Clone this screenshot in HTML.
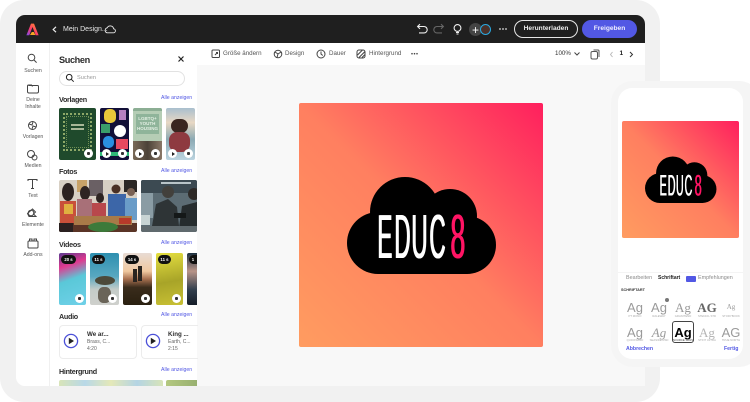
<!DOCTYPE html>
<html lang="de"><head><meta charset="utf-8"><title>Adobe Express</title>
<style>
html,body{margin:0;padding:0;background:#fff}
#p{position:relative;width:750px;height:402px;overflow:hidden;background:#fff;font-family:"Liberation Sans",sans-serif;color:#222;filter:blur(.35px)}
#p div,#p span.a,#p svg.a{position:absolute}
.t{white-space:nowrap;line-height:1}
.h{font-weight:bold;font-size:7.2px;letter-spacing:-.3px;color:#2c2c2c}
.l{font-size:5.2px;color:#5258e4}
.r{font-size:5.2px;color:#555;width:34px;text-align:center;left:16px;line-height:7px}
.th{border-radius:2px;overflow:hidden}
.b{width:9px;height:9px;border-radius:50%;background:#fff}
.b:after{content:"";position:absolute;left:3px;top:3px;width:3px;height:3px;background:#333;border-radius:1px}
.pl:after{left:3.5px;top:2.5px;width:0;height:0;background:none;border-radius:0;border-left:3px solid #222;border-top:2px solid transparent;border-bottom:2px solid transparent}
.pill{height:9px;border-radius:5px;background:#111;color:#fff;font-size:4.3px;line-height:9px;text-align:center;font-weight:bold}
.ag{font-size:13px;color:#9a9a9a;width:24px;text-align:center;line-height:1}
.c{font-size:2.8px;color:#aaa;width:26px;text-align:center;line-height:1}
.art{width:244px;height:244px;overflow:hidden}
.e{font-size:62px;line-height:62px;top:103.5px;white-space:nowrap;color:#fff;transform-origin:0 0;transform:scaleX(.36);text-shadow:2.5px 0 0 #fff}
.e8{color:#ff1464;transform:scaleX(.43);text-shadow:2px 0 0 #ff1464}
</style></head><body><div id="p">

<div style="left:0;top:0;width:660px;height:402px;background:#f1f1f1;border-radius:24px"></div>
<div style="left:16px;top:15px;width:629px;height:371px;background:#f8f8f8;border-radius:9px 9px 0 9px;overflow:hidden"></div>

<!-- top bar -->
<div style="left:16px;top:15px;width:629px;height:28px;background:#1f1f1f;border-radius:9px 9px 0 0"></div>
<svg class="a" style="left:26px;top:23px" width="13" height="13" viewBox="0 0 13 13"><defs><linearGradient id="lg" x1="0" y1="1" x2="1" y2="0"><stop offset="0" stop-color="#7a4cf0"/><stop offset=".45" stop-color="#ff3a6a"/><stop offset="1" stop-color="#ffa020"/></linearGradient></defs><path d="M5 .6h3l4.600 11.600H9.700L6.500 4 3.300 12.200H.4z" fill="url(#lg)"/><path d="M4 12l1.800-3h2L9.400 12z" fill="#f5a623"/></svg>
<svg class="a" style="left:52px;top:26px" width="5" height="7" viewBox="0 0 5 7"><path d="M4 .8L1.200 3.500 4 6.200" fill="none" stroke="#eee" stroke-width="1.200"/></svg>
<div class="t" style="left:63px;top:25.500px;font-size:7px;color:#e8e8e8">Mein Design...</div>
<svg class="a" style="left:104px;top:24px" width="12" height="10" viewBox="0 0 12 10"><path d="M3 8.800h6.200a2 2 0 0 0 .4-4 3.400 3.400 0 0 0-6.400-1A2.600 2.600 0 0 0 3 8.800z" fill="none" stroke="#eee" stroke-width=".9"/></svg>
<svg class="a" style="left:416px;top:23px" width="30" height="12" viewBox="0 0 30 12"><path d="M2 3.500h6a3.200 3.200 0 0 1 0 6.400H3M4 1.200L1.600 3.500 4 5.800" fill="none" stroke="#eee" stroke-width="1.100"/><path d="M27 3.500h-6a3.200 3.200 0 0 0 0 6.400h5M25 1.200l2.400 2.300L25 5.800" fill="none" stroke="#666" stroke-width="1.100"/></svg>
<svg class="a" style="left:452px;top:23px" width="11" height="13" viewBox="0 0 11 13"><circle cx="5.500" cy="5" r="3.400" fill="none" stroke="#eee" stroke-width="1.100"/><path d="M4 9.500h3M4.500 11h2" stroke="#eee" stroke-width="1"/></svg>
<div style="left:469px;top:23px;width:13px;height:13px;border-radius:50%;background:#444"></div>
<div class="t" style="left:469px;top:23.500px;width:13px;text-align:center;font-size:12px;color:#fff">+</div>
<div style="left:480px;top:24px;width:9px;height:9px;border-radius:50%;background:#4a3028;border:1.200px solid #2aa8e0"></div>
<svg class="a" style="left:498px;top:27px" width="10" height="4" viewBox="0 0 10 4"><circle cx="2" cy="2" r=".9" fill="#ddd"/><circle cx="5" cy="2" r=".9" fill="#ddd"/><circle cx="8" cy="2" r=".9" fill="#ddd"/></svg>
<div class="t" style="left:514px;top:20px;width:62px;height:16px;border:1px solid #e6e6e6;border-radius:10px;text-align:center;color:#eee;font-size:6.600px;font-weight:bold;line-height:16px">Herunterladen</div>
<div class="t" style="left:582px;top:20px;width:55px;height:18px;border-radius:10px;background:#5258e4;text-align:center;color:#eef;font-size:6.600px;font-weight:bold;line-height:18px">Freigeben</div>

<!-- rail + panel -->
<div style="left:16px;top:43px;width:33px;height:343px;background:#fff;border-radius:0 0 0 9px"></div>
<div style="left:49px;top:43px;width:1px;height:343px;background:#f0f0f0"></div>
<div style="left:50px;top:43px;width:147px;height:343px;background:#fff"></div>

<svg class="a" style="left:16px;top:50px" width="34" height="205" viewBox="0 0 34 205" fill="none" stroke="#444" stroke-width="1">
<circle cx="15.500" cy="7.500" r="3.300"/><path d="M18 10l2.600 2.600"/>
<path d="M12.500 35.500h9a1 1 0 0 1 1 1v5a1.500 1.500 0 0 1-1.500 1.500h-8a1.500 1.500 0 0 1-1.500-1.500v-5.500a1 1 0 0 1 1-1h3l1 1.500"/>
<circle cx="16.500" cy="75.500" r="4"/><path d="M13 74l3 1 1-3M16 79l1-3 3 1"/>
<circle cx="15" cy="104" r="3.500"/><circle cx="18.500" cy="107.500" r="2.500"/>
<path d="M12 131v-1.500h9v1.500M16.500 129.500v9M15 138.500h3"/>
<path d="M16.500 159l3 3-2 2 2.500 2.500h-7l-1.500-3z"/><circle cx="15" cy="163" r="2.800"/>
<rect x="12" y="191" width="10" height="7" rx="1"/><path d="M13.500 191v-2h2.500v2M18 191v-2h2.500v2"/>
</svg>
<div class="t r" style="top:68px">Suchen</div>
<div class="t r" style="top:97px">Deine<br>Inhalte</div>
<div class="t r" style="top:134px">Vorlagen</div>
<div class="t r" style="top:163px">Medien</div>
<div class="t r" style="top:193px">Text</div>
<div class="t r" style="top:222px">Elemente</div>
<div class="t r" style="top:252px">Add-ons</div>

<div class="t" style="left:59px;top:55.500px;font-size:9.200px;letter-spacing:-.4px;font-weight:bold;color:#2c2c2c">Suchen</div>
<svg class="a" style="left:177px;top:55px" width="8" height="8" viewBox="0 0 8 8"><path d="M1.500 1.500l5 5M6.500 1.500l-5 5" stroke="#222" stroke-width="1.200"/></svg>
<div style="left:59px;top:71px;width:124px;height:13px;border:1px solid #e2e2e2;border-radius:8px"></div>
<svg class="a" style="left:65px;top:73px" width="10" height="10" viewBox="0 0 10 10" fill="none" stroke="#222" stroke-width="1"><circle cx="4.200" cy="4.200" r="2.800"/><path d="M6.300 6.300l2.400 2.400"/></svg>
<div class="t" style="left:77px;top:75.500px;font-size:5.600px;color:#999">Suchen</div>

<div class="t h" style="left:59px;top:96.400px">Vorlagen</div><div class="t l" style="left:161px;top:96.400px">Alle anzeigen</div>
<div class="t h" style="left:59px;top:168.400px">Fotos</div><div class="t l" style="left:161px;top:169px">Alle anzeigen</div>
<div class="t h" style="left:59px;top:241px">Videos</div><div class="t l" style="left:161px;top:241.400px">Alle anzeigen</div>
<div class="t h" style="left:59px;top:313px">Audio</div><div class="t l" style="left:161px;top:313.400px">Alle anzeigen</div>
<div class="t h" style="left:59px;top:368.400px">Hintergrund</div><div class="t l" style="left:161px;top:368.400px">Alle anzeigen</div>

<!-- Vorlagen -->
<div class="th" style="left:59px;top:108px;width:37px;height:52px;background:#1f4a2c"><div style="left:4px;top:5px;width:29px;height:38px;border:2px dotted #8ea868;box-sizing:border-box"></div><div style="left:7px;top:8px;width:23px;height:32px;border:1px dotted #6f8f54;box-sizing:border-box"></div><div style="left:12px;top:16px;width:13px;height:2px;background:#a8b898"></div><div style="left:12px;top:20px;width:13px;height:2px;background:#a8b898"></div></div>
<div class="th" style="left:100px;top:108px;width:29px;height:52px;background:#120f38"><div style="left:4px;top:1px;width:12px;height:14px;background:#e8c83a;border-radius:5px"></div><div style="left:19px;top:2px;width:7px;height:10px;background:#b57fc0"></div><div style="left:1px;top:16px;width:9px;height:9px;background:#3a9d6a"></div><div style="left:14px;top:17px;width:12px;height:12px;background:#fff;border-radius:50%"></div><div style="left:3px;top:28px;width:11px;height:12px;background:#2a8fe0;border-radius:5px"></div><div style="left:16px;top:31px;width:12px;height:10px;background:#e84a60"></div><div style="left:0;top:44px;width:29px;height:4px;background:#2fb878"></div></div>
<div class="th" style="left:133px;top:108px;width:29px;height:52px;background:#b5cdb5"><div style="left:0;top:0;width:29px;height:3px;background:#8cae94"></div><div style="left:3px;top:6px;width:23px;height:20px;background:#8fb49a"></div><div class="t" style="left:3px;top:8px;width:23px;text-align:center;color:#e4f0e4;font-size:4.500px;font-weight:bold;line-height:5px">LGBTQ+<br>YOUTH<br>HOUSING</div><div style="left:0;top:33px;width:29px;height:19px;background:linear-gradient(90deg,#7a6a58,#4c4238,#8a7868)"></div></div>
<div class="th" style="left:166px;top:108px;width:29px;height:52px;background:linear-gradient(180deg,#a9bfce 0,#e8d8c4 28%,#8caab4 60%,#bcd4e0 100%)"><div style="left:5px;top:11px;width:17px;height:14px;border-radius:8px;background:#3a2620"></div><div style="left:3px;top:24px;width:21px;height:20px;border-radius:8px;background:#8e3a40"></div></div>
<div class="b" style="left:84px;top:149px"></div>
<div class="b pl" style="left:102px;top:149px"></div><div class="b" style="left:118px;top:149px"></div>
<div class="b pl" style="left:135px;top:149px"></div><div class="b" style="left:151px;top:149px"></div>
<div class="b pl" style="left:168px;top:149px"></div><div class="b" style="left:184px;top:149px"></div>

<!-- Fotos -->
<svg class="a th" style="left:59px;top:180px" width="78" height="52" viewBox="0 0 78 52"><rect width="78" height="52" fill="#d8d0c4"/><rect x="18" y="0" width="10" height="12" fill="#c8a268"/><rect x="30" y="0" width="14" height="16" fill="#6a6064"/><rect x="65" y="0" width="13" height="12" fill="#2c2826"/><ellipse cx="9" cy="12" rx="6" ry="9" fill="#2c2220"/><rect x="1" y="21" width="16" height="22" fill="#c8503a"/><rect x="5" y="24" width="9" height="10" fill="#e0b040"/><ellipse cx="26" cy="13" rx="5" ry="7" fill="#2e2422"/><rect x="18" y="19" width="15" height="18" fill="#a87078"/><ellipse cx="41" cy="18" rx="4" ry="5" fill="#2e2422"/><rect x="33" y="23" width="14" height="13" fill="#b8484c"/><circle cx="57" cy="9" r="4.500" fill="#4a3024"/><rect x="49" y="14" width="18" height="22" fill="#3c66a8"/><circle cx="72" cy="12" r="4" fill="#7a6254"/><rect x="66" y="18" width="12" height="22" fill="#6a9cc8"/><rect x="0" y="43" width="78" height="9" fill="#5a3426"/><rect x="15" y="36" width="58" height="9" fill="#a87a48"/><ellipse cx="44" cy="47" rx="15" ry="5" fill="#3c7a3a"/><rect x="60" y="38" width="12" height="6" fill="#b83a2a"/><rect x="0" y="43" width="14" height="9" fill="#2a2020"/></svg>
<svg class="a th" style="left:141px;top:180px" width="56" height="52" viewBox="0 0 56 52"><rect width="56" height="52" fill="#5c6c74"/><rect width="56" height="13" fill="#3c4a52"/><rect x="20" y="2" width="30" height="2" fill="#b8c4c8"/><rect x="0" y="13" width="12" height="25" fill="#8a9ca4"/><rect x="0" y="35" width="9" height="10" fill="#c8d4d4"/><circle cx="27" cy="12" r="6" fill="#42403c"/><path d="M11 46l4-22 12-5 9 8 2 19z" fill="#2e3436"/><circle cx="53" cy="14" r="6" fill="#2e2a28"/><path d="M38 48l3-22 15-4v26z" fill="#262c2e"/><rect x="33" y="33" width="12" height="5" fill="#141818"/><rect y="46" width="56" height="6" fill="#606a6e"/></svg>

<!-- Videos -->
<div class="th" style="left:59px;top:253px;width:27px;height:52px;background:linear-gradient(160deg,#5a3a90 0,#e03a90 25%,#5ac8d8 50%,#6fd0e8 100%)"></div>
<div class="th" style="left:90px;top:253px;width:29px;height:52px;background:linear-gradient(180deg,#2e8fb0 0,#58a8c0 45%,#c4ccc8 70%,#cfd0cc 100%)"><div style="left:5px;top:23px;width:20px;height:9px;background:#4c4a3a;border-radius:50%"></div><div style="left:8px;top:34px;width:13px;height:16px;background:#6a6458;border-radius:40%"></div></div>
<div class="th" style="left:123px;top:253px;width:29px;height:52px;background:linear-gradient(180deg,#e8dcd4 0,#f0c8a0 35%,#a87050 50%,#3a2c1c 66%,#2a2010 100%)"><div style="left:10px;top:16px;width:4px;height:13px;background:#2a2420"></div><div style="left:15px;top:13px;width:4px;height:15px;background:#2a2420"></div></div>
<div class="th" style="left:156px;top:253px;width:27px;height:52px;background:linear-gradient(170deg,#e4de40,#a8a428 55%,#c8c034 100%)"></div>
<div class="th" style="left:187px;top:253px;width:10px;height:52px;background:linear-gradient(180deg,#1c3040 0,#b89488 35%,#33404e 70%,#151d28 100%);border-radius:2px 0 0 2px"></div>
<div class="pill" style="left:61px;top:255px;width:15px">20 s</div>
<div class="pill" style="left:92px;top:255px;width:13px">11 s</div>
<div class="pill" style="left:125px;top:255px;width:14px">14 s</div>
<div class="pill" style="left:158px;top:255px;width:13px">11 s</div>
<div class="pill" style="left:189px;top:255px;width:8px;border-radius:5px 0 0 5px">1</div>
<div class="b" style="left:75px;top:294px"></div><div class="b" style="left:108px;top:294px"></div><div class="b" style="left:141px;top:294px"></div><div class="b" style="left:172px;top:294px"></div>

<!-- Audio -->
<div style="left:59px;top:325px;width:76px;height:32px;border:1px solid #ececec;border-radius:4px"></div>
<div style="left:141px;top:325px;width:56px;height:32px;border:1px solid #ececec;border-right:none;border-radius:4px 0 0 4px"></div>
<svg class="a" style="left:63px;top:333.300px" width="16" height="16" viewBox="0 0 16 16"><circle cx="8" cy="8" r="6.600" fill="none" stroke="#4b50d8" stroke-width="1.300"/><path d="M5.800 4.800v6.400L11 8z" fill="#222"/></svg>
<svg class="a" style="left:145px;top:333.300px" width="16" height="16" viewBox="0 0 16 16"><circle cx="8" cy="8" r="6.600" fill="none" stroke="#4b50d8" stroke-width="1.300"/><path d="M5.800 4.800v6.400L11 8z" fill="#222"/></svg>
<div class="t" style="left:87px;top:332px;font-size:6.200px;font-weight:bold;color:#2c2c2c">We ar...</div>
<div class="t" style="left:87px;top:340.200px;font-size:5px;color:#666">Brass, C...</div>
<div class="t" style="left:87px;top:347.200px;font-size:5px;color:#666">4:20</div>
<div class="t" style="left:168px;top:332px;font-size:6.200px;font-weight:bold;color:#2c2c2c">King ...</div>
<div class="t" style="left:168px;top:340.200px;font-size:5px;color:#666">Earth, C...</div>
<div class="t" style="left:168px;top:347.200px;font-size:5px;color:#666">2:15</div>

<!-- Hintergrund -->
<div style="left:59px;top:380px;width:104px;height:6px;background:linear-gradient(90deg,#d8e4b8,#b8d8e8 25%,#e4e8b8 50%,#b4d4e4 75%,#d8e4b8);border-radius:2px 2px 0 0"></div>
<div style="left:166px;top:380px;width:31px;height:6px;background:linear-gradient(90deg,#b4c880,#98b070);border-radius:2px 0 0 0"></div>

<!-- toolbar -->
<div style="left:197px;top:43px;width:448px;height:22px;background:#fff"></div>
<svg class="a" style="left:210px;top:48px" width="212" height="12" viewBox="0 0 212 12" fill="none" stroke="#444" stroke-width="1">
<rect x="2" y="2" width="7.500" height="7.500" rx="1"/><path d="M5 7l2.500-2.500M6 4.500h1.500V6"/>
<circle cx="68" cy="6" r="3.800"/><path d="M65 4l3 2-1 3.500M71 4l-3 2"/>
<circle cx="111" cy="6" r="4"/><path d="M111 3.500V6l1.800 1.500"/>
<rect x="147" y="2" width="8" height="8" rx="2"/><path d="M147.500 7l5-5M149 9.500l6-6M152 9.500l3-3"/>
<circle cx="202" cy="5.700" r=".8" fill="#444" stroke="none"/><circle cx="204.500" cy="5.700" r=".8" fill="#444" stroke="none"/><circle cx="207" cy="5.700" r=".8" fill="#444" stroke="none"/>
</svg>
<div class="t" style="left:223px;top:51px;font-size:6.200px;color:#555">Größe ändern</div>
<div class="t" style="left:285px;top:51px;font-size:6.200px;color:#555">Design</div>
<div class="t" style="left:329px;top:51px;font-size:6.200px;color:#555">Dauer</div>
<div class="t" style="left:369px;top:51px;font-size:6.200px;color:#555">Hintergrund</div>
<div class="t" style="left:555px;top:51px;font-size:6.200px;color:#333">100%</div>
<svg class="a" style="left:573px;top:51px" width="8" height="6" viewBox="0 0 8 6"><path d="M1.500 1.500L4 4l2.500-2.500" fill="none" stroke="#444"/></svg>
<svg class="a" style="left:590px;top:49px" width="10" height="11" viewBox="0 0 10 11" fill="none" stroke="#555"><rect x="1" y="2.500" width="6.500" height="7.500" rx="1.500"/><path d="M3.500 1h4.500a1 1 0 0 1 1 1v6"/></svg>
<svg class="a" style="left:609px;top:51px" width="26" height="7" viewBox="0 0 26 7" fill="none"><path d="M3.500 1L1.500 3.500l2 2.500" stroke="#bbb"/><path d="M21 1l2.500 2.500L21 6" stroke="#333"/></svg>
<div class="t" style="left:619.500px;top:51px;font-size:6.500px;color:#222;font-weight:bold">1</div>

<!-- canvas art -->
<div class="art" style="left:299px;top:103px;border-radius:2px">
<svg class="a" style="left:0;top:0" width="244" height="244" viewBox="0 0 244 244">
<defs><linearGradient id="g" x1="0" y1="1" x2="1" y2="0"><stop offset="0" stop-color="#ff9c60"/><stop offset=".5" stop-color="#ff7f60"/><stop offset="1" stop-color="#ff1f5e"/></linearGradient></defs>
<rect width="244" height="244" fill="url(#g)"/>
<g fill="#000" transform="translate(-299 -103)"><circle cx="378" cy="243" r="31"/><circle cx="405" cy="212" r="35"/><circle cx="450" cy="216" r="27"/><circle cx="467" cy="245" r="29"/><rect x="378" y="212" width="89" height="62"/></g>
</svg>
<div class="e" style="left:78.200px">E</div><div class="e" style="left:95.200px">D</div><div class="e" style="left:112.200px">U</div><div class="e" style="left:129.800px">C</div><div class="e e8" style="left:151px">8</div>
</div>

<!-- phone -->
<div style="left:611px;top:81px;width:150px;height:286px;background:#f5f5f5;border-radius:22px"></div>
<div style="left:618px;top:88px;width:125px;height:271px;background:#fff;border-radius:14px"></div>
<div class="art" style="left:622px;top:121px;border-radius:4px;transform-origin:0 0;transform:scale(.4795)">
<svg class="a" style="left:0;top:0" width="244" height="244" viewBox="0 0 244 244">
<rect width="244" height="244" fill="url(#g)"/>
<g fill="#000" transform="translate(-299 -103)"><circle cx="378" cy="243" r="31"/><circle cx="405" cy="212" r="35"/><circle cx="450" cy="216" r="27"/><circle cx="467" cy="245" r="29"/><rect x="378" y="212" width="89" height="62"/></g>
</svg>
<div class="e" style="left:78.200px">E</div><div class="e" style="left:95.200px">D</div><div class="e" style="left:112.200px">U</div><div class="e" style="left:129.800px">C</div><div class="e e8" style="left:151px">8</div>
</div>
<div style="left:618px;top:272px;width:125px;height:1px;background:#f4f4f4"></div>
<div class="t" style="left:626px;top:276.300px;font-size:5.400px;color:#8a8a8a">Bearbeiten</div>
<div class="t" style="left:658px;top:276.300px;font-size:5px;color:#222;font-weight:bold">Schriftart</div>
<div style="left:686px;top:276px;width:10px;height:6px;background:#5258e4;border-radius:1px"></div>
<div class="t" style="left:698px;top:276.300px;font-size:5.400px;color:#8a8a8a">Empfehlungen</div>
<div class="t" style="left:621px;top:288.500px;font-size:3.800px;font-weight:bold;color:#333">SCHRIFTART</div>

<div class="t ag" style="left:623px;top:301px">Ag</div>
<div class="t ag" style="left:647px;top:301px">Ag</div>
<div style="left:665px;top:298px;width:4px;height:4px;border-radius:50%;background:#777"></div>
<div class="t ag" style="left:671px;top:301px;font-family:'Liberation Serif',serif">Ag</div>
<div class="t ag" style="left:695px;top:301px;font-family:'Liberation Serif',serif;font-weight:bold;color:#666">AG</div>
<div class="t ag" style="left:719px;top:304px;font-size:7px;color:#999;font-family:'Liberation Serif',serif">Ag</div>
<div class="t c" style="left:622px;top:315px">PT MONO</div>
<div class="t c" style="left:646px;top:315px">RALEWAY</div>
<div class="t c" style="left:670px;top:315px">GRANITEND</div>
<div class="t c" style="left:694px;top:315px">STENCIL STD</div>
<div class="t c" style="left:718px;top:315px">STORYBOOK</div>

<div class="t ag" style="left:623px;top:326px">Ag</div>
<div class="t ag" style="left:647px;top:326px;font-style:italic;font-family:'Liberation Serif',serif">Ag</div>
<div style="left:672px;top:321px;width:20px;height:20px;border:1.200px solid #444;border-radius:3px"></div>
<div class="t ag" style="left:671px;top:325.500px;color:#000;font-weight:bold">Ag</div>
<div class="t ag" style="left:695px;top:326px;color:#b5b5b5;font-family:'Liberation Serif',serif">Ag</div>
<div class="t ag" style="left:719px;top:326px">AG</div>
<div class="t c" style="left:622px;top:339px">QUICKSAND</div>
<div class="t c" style="left:646px;top:339px">SEASIDE RSD</div>
<div class="t c" style="left:670px;top:339px;color:#444">SOURCE SANS</div>
<div class="t c" style="left:694px;top:339px">STINT ULTRA</div>
<div class="t c" style="left:718px;top:339px">TRUE NORTH</div>

<div class="t" style="left:626px;top:346.500px;font-size:5.200px;color:#5258e4;font-weight:bold">Abbrechen</div>
<div class="t" style="left:724px;top:346.500px;font-size:5.200px;color:#5258e4;font-weight:bold">Fertig</div>
</div></body></html>
